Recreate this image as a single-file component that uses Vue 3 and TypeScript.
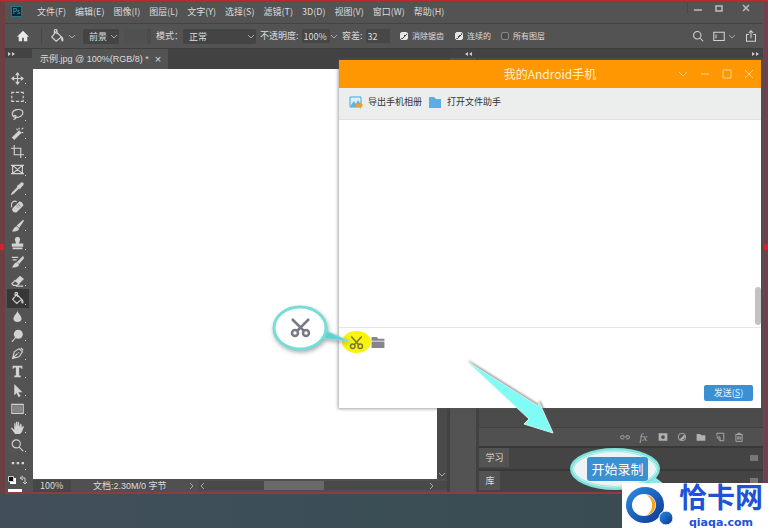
<script setup lang="ts">
import { ref } from 'vue'

interface Tool {
  name: string
  line?: string
  solid?: string
}

const menus: string[] = ['文件(F)', '编辑(E)', '图像(I)', '图层(L)', '文字(Y)', '选择(S)', '滤镜(T)', '3D(D)', '视图(V)', '窗口(W)', '帮助(H)']

const tools: Tool[] = [
  { name: '移动', line: 'M8 2v12M2 8h12', solid: 'M8 0l3 4H5zM8 16l3-4H5zM0 8l4-3v6zM16 8l-4-3v6z' },
  { name: '选框', line: 'M1 5V3h3M6 3h4M12 3h3v2M15 7v3M15 12v2h-3M10 14H6M4 14H1v-2M1 10V7' },
  { name: '套索', line: 'M4 11C0 9 1 3 7 2s9 2 7 6-8 4-10 3c-2-1 1-3 2-1s-1 4-3 4' },
  { name: '魔棒', line: 'M10 1v2M15 1l-2 2M15 7h-2M7 2l1 2', solid: 'M10 4l3 3-9 9-3-3z' },
  { name: '裁剪', line: 'M4 0v12h12M0 4h12v12' },
  { name: '图框', line: 'M2 3h12v10H2zM2 3l12 10M14 3L2 13M0 3h16M0 13h16' },
  { name: '吸管', line: 'M9 6l-7 7-1 2 2-1 7-7', solid: 'M7 5l3-2 2-2c2-2 5 1 3 3l-2 2-2 3z' },
  { name: '修复', line: 'M1 9c-2-5 2-9 6-7', solid: 'M2 10l8-8c2-1 6 3 5 5l-8 8c-3 2-7-2-5-5z' },
  { name: '画笔', solid: 'M15 1l-8 7 3 3 6-9zM7 9l3 3c-1 3-5 4-9 3 2-1 2-5 6-6z' },
  { name: '图章', solid: 'M5 2c1-3 5-3 6 0 1 2-1 3-1 6h5v4H1V8h5c0-3-2-4-1-6zM2 13h12v2H2z' },
  { name: '历史画笔', line: 'M1 3h8M2 6h5', solid: 'M15 1L7 9l3 2 6-7zM7 9l3 3c-1 3-5 4-9 3 2-1 2-5 6-6z' },
  { name: '橡皮擦', line: 'M5 8l5 4-3 2H3l-2-2zM6 15h9', solid: 'M5 8l6-6 5 4-6 6z' },
  { name: '油漆桶', line: 'M7 3l6 6-6 5-5-5zM5 6V2c0-2 3-2 3 0v4', solid: 'M13 8c2 1 3 4 2 6-2 1-3-2-2-6z' },
  { name: '模糊', solid: 'M8 1c1 4 5 6 5 10 0 5-10 5-10 0 0-4 4-6 5-10z' },
  { name: '减淡', line: 'M6 10l-5 6', solid: 'M9 1a5.500 5.500 0 1 1 0 11a5.500 5.500 0 0 1 0-11z' },
  { name: '钢笔', line: 'M2 14L4 6l6-4 4 4-4 6zM2 14l6-6M9 7h1M12 1l3 3' },
  { name: '文字', solid: 'M2 1h12v4h-1c0-2-1-2-3-2v10h2v2H4v-2h2V3C4 3 3 3 3 5H2z' },
  { name: '选择', solid: 'M4 0l10 10H9l3 5-3 1-2-5-3 3z' },
  { name: '矩形', line: 'M1 3h14v11H1z' },
  { name: '抓手', solid: 'M5 16L0 9l1-1 3 3V3l1-1 1 5V1h2v6l1-6h1v6l2-4 1 1v4l2-2 1 1-3 7-2 2z' },
  { name: '缩放', line: 'M6.500 1a5 5 0 1 1 0 10a5 5 0 0 1 0-10zM10 10l5 5' },
  { name: '更多', solid: 'M1 6h3v3H1zM7 6h3v3H7zM13 6h3v3h-3z' },
]

const activeTool = ref('油漆桶')
const fillSource = ref('前景')
const blendMode = ref('正常')
const opacity = ref('100%')
const tolerance = ref('32')
const antiAlias = ref(true)
const contiguous = ref(true)
const allLayers = ref(false)
const message = ref('')
</script>

<template>
  <div class="desktop">
    <span class="handle handle-left"></span>
    <span class="handle handle-right"></span>
    <main class="editor">
      <header class="menubar">
        <span class="ps">Ps</span>
        <nav class="menus">
          <button v-for="m in menus" :key="m" type="button">{{ m }}</button>
        </nav>
        <div class="winctl">
          <button type="button" aria-label="最小化"><svg viewBox="0 0 10 10"><path d="M1 7h8" /></svg></button>
          <button type="button" aria-label="还原"><svg viewBox="0 0 10 10"><path d="M2 3h6v5H2z" /></svg></button>
          <button type="button" aria-label="关闭"><svg viewBox="0 0 10 10"><path d="M2 2l6 6M8 2L2 8" /></svg></button>
        </div>
      </header>

      <section class="options">
        <button type="button" class="home" aria-label="主页">
          <svg viewBox="0 0 14 14"><path d="M7 1L0 8h2v5h4V9h2v4h4V8h2z" /></svg>
        </button>
        <button type="button" class="bucket" aria-label="油漆桶">
          <svg class="glyph" viewBox="0 0 16 16"><path d="M7 3l6 6-6 5-5-5zM5 6V2c0-2 3-2 3 0v4" /><path class="solid" d="M13 8c2 1 3 4 2 6-2 1-3-2-2-6z" /></svg>
          <svg class="chev" viewBox="0 0 8 8"><path d="M1 3l3 3 3-3" /></svg>
        </button>
        <div class="pick">
          <select v-model="fillSource" aria-label="填充源"><option>前景</option><option>图案</option></select>
          <svg class="chev" viewBox="0 0 8 8"><path d="M1 3l3 3 3-3" /></svg>
        </div>
        <div class="pattern"></div>
        <div class="field">
          <label for="mode">模式：</label>
          <div class="pick grow">
            <select id="mode" v-model="blendMode"><option>正常</option><option>溶解</option></select>
            <svg class="chev" viewBox="0 0 8 8"><path d="M1 3l3 3 3-3" /></svg>
          </div>
        </div>
        <div class="field">
          <label for="opacity">不透明度:</label>
          <input id="opacity" v-model="opacity" class="box" type="text" />
          <svg class="chev" viewBox="0 0 8 8"><path d="M1 3l3 3 3-3" /></svg>
        </div>
        <div class="field tolerance">
          <label for="tolerance">容差:</label>
          <input id="tolerance" v-model="tolerance" class="box" type="text" />
        </div>
        <label class="check"><input v-model="antiAlias" type="checkbox" />消除锯齿</label>
        <label class="check"><input v-model="contiguous" type="checkbox" />连续的</label>
        <label class="check"><input v-model="allLayers" type="checkbox" />所有图层</label>
        <div class="right-tools">
          <button type="button" aria-label="搜索"><svg class="glyph" viewBox="0 0 16 16"><path d="M7 2a5 5 0 1 1 0 10a5 5 0 0 1 0-10zM11 11l4 4" /></svg></button>
          <button type="button" class="workspace" aria-label="工作区">
            <svg class="glyph" viewBox="0 0 16 16"><path d="M1 3h14v11H1zM4 6v5" /></svg>
            <svg class="chev" viewBox="0 0 8 8"><path d="M1 3l3 3 3-3" /></svg>
          </button>
          <button type="button" aria-label="共享"><svg class="glyph" viewBox="0 0 16 16"><path d="M5 6H2v9h12V6h-3M8 11V1M5 4l3-3 3 3" /></svg></button>
        </div>
      </section>

      <div class="work">
        <aside class="rail">
          <div class="strip"><svg viewBox="0 0 8 6"><path d="M0 1l3 2-3 2zM4 1l3 2-3 2z" /></svg></div>
          <div class="tools">
            <button
              v-for="t in tools"
              :key="t.name"
              type="button"
              :class="{ active: t.name === activeTool }"
              :aria-label="t.name"
              @click="activeTool = t.name"
            >
              <svg class="glyph" viewBox="0 0 16 16">
                <path v-if="t.line" :d="t.line" />
                <path v-if="t.solid" class="solid" :d="t.solid" />
                <rect v-if="t.name === '矩形'" class="shade" x="2" y="4" width="12" height="9" />
                <path v-if="t.name === '修复'" class="dots" d="M7 7l3 3M9 5l3 3" />
              </svg>
              <i></i>
            </button>
          </div>
          <svg class="swatches" viewBox="0 0 22 17">
            <path fill="#fff" d="M3 3h6v6H3zM1 14h14v3H1z" />
            <path fill="#111" stroke="#ccc" d="M1.500 1.500h5v5h-5z" />
            <path fill="none" stroke="#ccc" d="M14 3h4v5M16 1l-3 2 3 2M16 7l2 2 2-2" />
          </svg>
        </aside>

        <section class="document">
          <div class="tabs">
            <div class="tab">示例.jpg @ 100%(RGB/8) *<button type="button" aria-label="关闭文档">×</button></div>
          </div>
          <div class="canvas-row">
            <div class="canvas"></div>
            <div class="vscroll"><svg class="chev" viewBox="0 0 8 8"><path d="M1 3l3 3 3-3" /></svg></div>
          </div>
          <footer class="status">
            <span class="zoom">100%</span>
            <span class="docsize">文档:2.30M/0 字节</span>
            <svg class="chev" viewBox="0 0 8 8"><path d="M3 1l3 3-3 3" /></svg>
            <div class="hscroll">
              <svg class="chev" viewBox="0 0 8 8"><path d="M5 1L2 4l3 3" /></svg>
              <div class="track"><div class="thumb"></div></div>
              <svg class="chev" viewBox="0 0 8 8"><path d="M3 1l3 3-3 3" /></svg>
            </div>
          </footer>
        </section>

        <aside class="dock">
          <div class="strip"><svg viewBox="0 0 8 6"><path d="M3 1L0 3l3 2zM7 1L4 3l3 2z" /></svg></div>
          <div class="dock-body"></div>
        </aside>

        <aside class="panels">
          <div class="strip end"><svg viewBox="0 0 8 6"><path d="M0 1l3 2-3 2zM4 1l3 2-3 2z" /></svg></div>
          <div class="layers"></div>
          <div class="layer-actions">
            <button type="button" aria-label="链接图层"><svg class="glyph" viewBox="0 0 16 16"><path d="M6 6H3C0 6 0 11 3 11h3M10 6h3c3 0 3 5 0 5h-3M5 8h6" /></svg></button>
            <button type="button" class="fx">fx</button>
            <button type="button" aria-label="添加蒙版"><svg class="glyph" viewBox="0 0 16 16"><path class="solid" fill-rule="evenodd" d="M1 2h14v12H1zM8 5a3 3 0 1 0 0 6a3 3 0 0 0 0-6z" /></svg></button>
            <button type="button" aria-label="调整图层"><svg class="glyph" viewBox="0 0 16 16"><circle cx="8" cy="8" r="6" /><path class="solid" d="M12 4a6 6 0 0 1-8 8z" /></svg></button>
            <button type="button" aria-label="新建组"><svg class="glyph" viewBox="0 0 16 16"><path class="solid" d="M1 3h6l1 2h7v9H1z" /></svg></button>
            <button type="button" aria-label="新建图层"><svg class="glyph" viewBox="0 0 16 16"><path d="M3 6V2h11v12H8M3 8h5v6z" /></svg></button>
            <button type="button" aria-label="删除图层"><svg class="glyph" viewBox="0 0 16 16"><path d="M2 4h12M6 4V2h4v2M3 5v10h10V5M6 7v5M8 7v5M10 7v5" /></svg></button>
          </div>
          <div class="panel-tab"><button type="button">学习</button><svg viewBox="0 0 8 8"><path d="M0 2h8M0 4h8M0 6h8" /></svg></div>
          <div class="panel-tab"><button type="button">库</button><svg viewBox="0 0 8 8"><path d="M0 2h8M0 4h8M0 6h8" /></svg></div>
        </aside>
      </div>
    </main>

    <section class="phone">
      <header class="phone-title">
        <h1>我的Android手机</h1>
        <div class="phone-ctl">
          <button type="button" aria-label="菜单"><svg viewBox="0 0 10 10"><path d="M1 3l4 4 4-4" /></svg></button>
          <button type="button" aria-label="最小化"><svg viewBox="0 0 10 10"><path d="M1 5h8" /></svg></button>
          <button type="button" aria-label="最大化"><svg viewBox="0 0 10 10"><path d="M1 1h8v8H1z" /></svg></button>
          <button type="button" aria-label="关闭"><svg viewBox="0 0 10 10"><path d="M1 1l8 8M9 1L1 9" /></svg></button>
        </div>
      </header>
      <div class="phone-bar">
        <button type="button">
          <svg viewBox="0 0 14 14"><path fill="#dff0fa" stroke="#4ba3dc" d="M1 2h11v10H1z" /><path fill="#62b3e3" d="M2 10l3-4 2 3 2-4 3 5v2H2z" /><path fill="#e6a32d" d="M7 9h4V7l3 3-3 4v-2H7z" /></svg>
          导出手机相册
        </button>
        <button type="button">
          <svg viewBox="0 0 14 14"><path fill="#5aaee2" d="M1 2h5l2 2h5v9H1z" /></svg>
          打开文件助手
        </button>
      </div>
      <div class="messages"><div class="bar"></div></div>
      <div class="compose">
        <div class="compose-tools">
          <button type="button" class="snip" aria-label="截图">
            <svg viewBox="0 0 20 20"><path d="M3 2l10 11M17 2L7 13" /><circle cx="5" cy="15" r="3" /><circle cx="15" cy="15" r="3" /></svg>
          </button>
          <button type="button" class="folder" aria-label="文件">
            <svg viewBox="0 0 14 12"><path d="M0 0h6l1 2h7v2H0zM0 5h14v7H0z" /></svg>
          </button>
        </div>
        <textarea v-model="message" aria-label="消息"></textarea>
        <button type="button" class="send">发送(<u>S</u>)</button>
      </div>
    </section>

    <svg class="bubble" viewBox="0 0 90 60">
      <path d="M54 30L79 41 50 38z" fill="#62cfd0" stroke="#8ce0db" />
      <ellipse cx="30" cy="28" rx="26" ry="21" fill="#fff" stroke="#76ddd7" stroke-width="3" />
      <g fill="none" stroke="#777a84" stroke-width="2.5">
        <path d="M22 19l12 12M39 19L27 31" />
        <circle cx="25" cy="33" r="3" /><circle cx="36" cy="33" r="3" />
      </g>
    </svg>

    <svg class="arrow" viewBox="0 0 90 74">
      <path d="M2 2L72 46l1-4 14 31-29-9 5-5z" fill="#7ffcf5" stroke="#d4f3ef" stroke-linejoin="round" />
    </svg>

    <div class="record">
      <svg viewBox="0 0 100 46">
        <path d="M70 34L98 40 82 28z" fill="#8ee9e3" />
        <ellipse cx="45" cy="22" rx="43" ry="19" fill="#eef3f8" stroke="#7fe3dc" stroke-width="4" />
        <ellipse cx="45" cy="22" rx="42" ry="18" fill="none" stroke="#c6f6f1" />
      </svg>
      <button type="button">开始录制</button>
    </div>

    <a class="brand" href="#">
      <svg viewBox="0 0 52 45">
        <defs>
          <linearGradient id="ring" x1="0" y1="0" x2="1" y2="1">
            <stop offset="0" stop-color="#2b8fe6" />
            <stop offset="1" stop-color="#0d3490" />
          </linearGradient>
        </defs>
        <ellipse cx="23" cy="22" rx="19" ry="18" fill="url(#ring)" />
        <ellipse cx="22" cy="22" rx="12" ry="11" fill="#fff" />
        <path d="M25 12c12 4 11 17-1 21 8-6 8-15 1-21z" fill="#f5a21c" />
        <circle cx="44" cy="35" r="7" fill="url(#ring)" stroke="#fff" />
      </svg>
      <span class="brand-text"><strong>恰卡网</strong><small>qiaqa.com</small></span>
    </a>
  </div>
</template>

<style>
body { margin: 0; }
</style>

<style scoped>
* { box-sizing: border-box; }
.desktop {
  position: relative;
  display: flex;
  min-height: 100vh;
  padding: 2px 4px 34px 5px;
  overflow: hidden;
  background:
    linear-gradient(#c32832, #a32b33) 0 0 / 100% 2px no-repeat,
    linear-gradient(90deg, #424f5a, #3a4e56 50%, #394951) 0 100% / 100% 34px no-repeat,
    linear-gradient(90deg, #6b4043 50%, #70404e 50%);
  font: 9px/12px "Noto Sans CJK SC", "Noto Sans", sans-serif;
  color: #dcdcdc;
}
button, select, input, textarea { font: inherit; color: inherit; }
button { display: flex; align-items: center; justify-content: center; padding: 0; border: 0; background: none; white-space: nowrap; }
svg { display: block; flex: none; }
.glyph { width: 12px; height: 12px; fill: none; stroke: #d2d2d2; stroke-width: 1.4; }
.solid { fill: #d2d2d2; stroke: none; }
.shade { fill: #858585; stroke: none; }
.dots { stroke: #666; stroke-dasharray: 1 1; }
.chev { width: 8px; height: 8px; fill: none; stroke: #a8a8a8; }
.handle { position: absolute; width: 4px; height: 6px; background: #d8202c; }
.handle-left { top: 244px; left: 0; }
.handle-right { top: 244px; right: 0; }

.editor { display: flex; flex: 1; flex-direction: column; min-width: 0; border-right: 1px solid #9b343b; border-bottom: 2px solid #943941; background: #424242; }
.menubar { display: flex; align-items: center; height: 21px; padding-bottom: 2px; background: #535353; }
.ps { width: 11px; height: 11px; margin: 0 15px 0 6px; border: 1px solid #1e7893; background: #06263a; color: #36b3e0; font-size: 7px; line-height: 9px; text-align: center; }
.menus { display: flex; gap: 9px; }
.winctl { display: flex; margin-left: auto; align-self: flex-start; }
.winctl button { width: 21px; height: 12px; }
.winctl button:first-child { border-left: 1px solid #494949; }
.winctl button:last-child { width: 34px; }
.winctl svg { width: 10px; height: 10px; fill: none; stroke: #bdbdbd; stroke-width: 1.5; }

.options { display: grid; grid-template-columns: 36px 42px 36px 37px 104px 82px 58px 55px 46px 52px 1fr; align-items: center; height: 26px; border-top: 1px solid #444; border-bottom: 1px solid #3e3e3e; background: #535353; }
.home svg { width: 12px; height: 12px; fill: #e8e8e8; }
.bucket { gap: 4px; height: 16px; border-left: 1px solid #474747; }
.bucket .glyph { width: 14px; height: 14px; }
.pick { position: relative; display: flex; align-items: center; height: 15px; border-radius: 2px; background: #444; }
.pick select { width: 100%; height: 15px; padding: 0 10px 0 6px; border: 0; appearance: none; background: none; line-height: 15px; }
.pick .chev { position: absolute; right: 1px; }
.grow { flex: 1; }
.pattern { height: 15px; margin: 0 5px; border-right: 4px solid #4b4b4b; background: #505050; }
.field { display: flex; align-items: center; padding-right: 4px; white-space: nowrap; }
.tolerance { padding-right: 10px; }
.box { flex: 1; min-width: 0; height: 14px; margin-left: 3px; padding: 0 0 0 2px; border: 0; background: #474747; font-size: 9px; }
.check { display: flex; align-items: center; gap: 4px; font-size: 8px; white-space: nowrap; }
.check input { width: 8px; height: 8px; margin: 0; border: 1px solid #888; border-radius: 2px; appearance: none; background: #4a4a4a; }
.check input:checked { border-color: #e4e4e4; background: linear-gradient(135deg, transparent 50%, #444 50% 66%, transparent 66%) #e4e4e4; }
.right-tools { display: flex; justify-content: flex-end; gap: 9px; padding-right: 6px; }
.workspace { gap: 3px; }

.work { display: grid; flex: 1; grid-template-columns: 28px 418fr 29px 284fr; min-height: 0; }
.strip { display: flex; align-items: center; height: 9px; padding: 0 3px; background: #434343; }
.strip svg { width: 8px; height: 6px; fill: #ccc; }
.end { justify-content: flex-end; }
.rail { display: flex; flex-direction: column; padding-right: 1px; background: #535353; }
.tools { display: flex; flex: 1; flex-direction: column; padding-top: 11px; }
.tools button { flex: 1; width: 22px; min-height: 0; margin-left: 2px; }
.tools button.active { background: #373737; }
.tools .glyph { width: 13px; height: 13px; }
.tools i { align-self: flex-end; width: 1px; height: 1px; margin: 0 0 3px 1px; background: #ccc; }
.swatches { width: 22px; height: 17px; margin: 2px 0 0 2px; }

.document { display: flex; flex-direction: column; min-width: 0; border-right: 3px solid #424242; }
.tabs { display: flex; height: 20px; background: #424242; }
.tab { display: flex; align-items: center; gap: 6px; padding: 0 7px; background: #535353; font-family: "Liberation Sans", "Noto Sans CJK SC", sans-serif; white-space: nowrap; }
.tab button { font-size: 11px; }
.canvas-row { display: flex; flex: 1; }
.canvas { flex: 1; background: #fff; }
.vscroll { display: flex; align-items: flex-end; width: 10px; padding: 1px; background: #4a4a4a; }
.status { display: flex; align-items: center; height: 13px; background: #505050; }
.zoom { width: 38px; padding-left: 7px; background: #474747; }
.docsize { width: 116px; padding-left: 22px; font-family: "Liberation Sans", "Noto Sans CJK SC", sans-serif; white-space: nowrap; }
.hscroll { display: flex; flex: 1; align-items: center; margin-left: 4px; padding-right: 12px; background: #494949; }
.track { flex: 1; padding-left: 24%; }
.thumb { width: 60px; height: 9px; background: #696969; }

.dock { display: flex; flex-direction: column; border-right: 3px solid #424242; }
.dock .strip { justify-content: flex-end; }
.dock-body { flex: 1; background: #535353; }
.panels { display: flex; flex-direction: column; min-width: 0; }
.layers { flex: 1; background: #4b4b4b; }
.layer-actions { display: flex; align-items: center; justify-content: flex-end; gap: 8px; height: 19px; padding-right: 19px; border-top: 1px solid #414141; background: #505050; }
.layer-actions button { width: 11px; }
.layer-actions .glyph { width: 10px; height: 10px; opacity: .75; }
.fx { font-family: "Liberation Serif", serif; font-size: 11px; font-style: italic; color: #a9a9a9; }
.panel-tab { display: flex; align-items: center; justify-content: space-between; height: 23px; padding: 0 5px 2px 0; border-top: 2px solid #383838; background: #444; }
.panel-tab button { height: 19px; padding: 0 6px; background: #535353; }
.panel-tab svg { width: 8px; height: 8px; stroke: #aaa; }

.phone { position: absolute; top: 60px; right: 7px; left: 339px; display: flex; flex-direction: column; height: 348px; background: #fff; box-shadow: 0 0 3px 1px #5558; color: #333; }
.phone-title { display: grid; grid-template-columns: 1fr auto 1fr; align-items: center; height: 28px; background: #ff9703; color: #fff2cf; }
.phone-title h1 { grid-column: 2; margin: 0; font-size: 12px; font-weight: 400; line-height: 16px; }
.phone-ctl { display: flex; justify-content: flex-end; gap: 12px; padding-right: 7px; }
.phone-ctl svg { width: 10px; height: 10px; fill: none; stroke: #ffd38b; }
.phone-bar { display: flex; align-items: center; gap: 6px; height: 32px; padding: 0 10px 3px; border-bottom: 1px solid #e2e2e2; background: #eceeee; }
.phone-bar button { gap: 5px; }
.phone-bar svg { width: 14px; height: 14px; }
.messages { display: flex; flex: 1; align-items: flex-end; justify-content: flex-end; padding: 2px 0; }
.bar { width: 6px; height: 38px; border-radius: 3px; background: #c2c2c2; }
.compose { display: flex; flex-direction: column; height: 81px; padding: 3px 8px 7px 3px; border-top: 1px solid #e6e6e6; }
.compose-tools { display: flex; align-items: center; }
.snip { width: 29px; height: 22px; border-radius: 50%; background: #faf30d; }
.snip svg { width: 15px; height: 15px; fill: none; stroke: #77792c; stroke-width: 2; }
.folder svg { width: 14px; height: 11px; fill: #85858f; }
textarea { flex: 1; min-height: 0; padding: 0; border: 0; resize: none; background: none; }
.send { align-self: flex-end; width: 49px; height: 16px; border-radius: 2px; background: #3b90d4; color: #e3f2ff; }

.bubble { position: absolute; top: 300px; left: 270px; width: 90px; height: 60px; filter: drop-shadow(1px 2px 2px #6668); }
.arrow { position: absolute; top: 360px; left: 466px; width: 90px; height: 74px; filter: drop-shadow(1px -1px 1px #5559); }
.record { position: absolute; top: 447px; left: 570px; display: grid; width: 100px; }
.record svg { grid-area: 1 / 1; width: 100px; height: 46px; }
.record button { z-index: 1; grid-area: 1 / 1; width: 61px; height: 24px; margin: 10px 0 0 17px; border-radius: 3px; background: #3b90d0; color: #fff; font-size: 13px; }
.brand { position: absolute; right: 0; bottom: 0; display: flex; width: 146px; height: 45px; background: #fff; color: #2152d6; text-decoration: none; }
.brand > svg { width: 52px; height: 45px; }
.brand-text { display: flex; flex: 1; flex-direction: column; align-items: center; justify-content: space-between; }
.brand strong { font-size: 28px; font-weight: 700; line-height: 26px; }
.brand small { font: 700 11px/11px "DejaVu Sans", sans-serif; }
</style>
